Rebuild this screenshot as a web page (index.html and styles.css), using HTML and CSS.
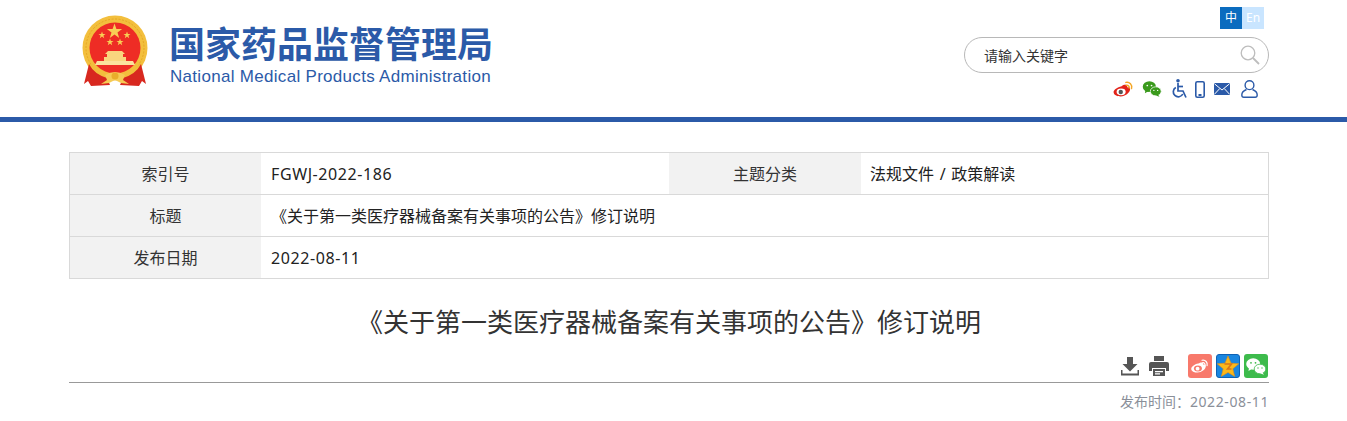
FILE: index.html
```html
<!DOCTYPE html>
<html lang="zh-CN">
<head>
  <meta charset="UTF-8">
  <title>《关于第一类医疗器械备案有关事项的公告》修订说明</title>
  <link rel="stylesheet" href="styles.css">
</head>
<body>
  <header class="header">
    <div class="wrap header-inner">
      <a class="logo">
        <svg class="emblem" width="68" height="72" viewBox="0 0 68 72">
          <circle cx="34" cy="34" r="32.500" fill="#f3bf3d"/>
          <circle cx="34" cy="34" r="29" fill="none" stroke="#e5a723" stroke-width="1" stroke-dasharray="2 1.500"/>
          <circle cx="34" cy="34" r="25.500" fill="#ee2c25"/>
          <path d="M33.500 9.500l1.900 5.400h5.700l-4.600 3.500 1.700 5.500-4.700-3.300-4.700 3.300 1.700-5.500-4.600-3.500h5.700z" fill="#f8cf55"/>
          <path d="M21 17.500l.9 2.500h2.600l-2.100 1.600.8 2.600L21 22.600l-2.200 1.600.8-2.600-2.100-1.600h2.600zM46 17.500l.9 2.500h2.600l-2.100 1.600.8 2.600L46 22.600l-2.200 1.600.8-2.600-2.100-1.600h2.600zM29 24.500l.9 2.500h2.600l-2.100 1.600.8 2.600L29 29.600l-2.200 1.600.8-2.600-2.100-1.600h2.600zM39 24.500l.9 2.500h2.600l-2.100 1.600.8 2.600L39 29.600l-2.200 1.600.8-2.600-2.100-1.600h2.600z" fill="#f8cf55"/>
          <path d="M27 37h14l3 3h-2v3h3v4H23v-4h3v-3h-2z" fill="#f9d67e"/>
          <path d="M16 47h36l2 4H14z" fill="#fbe29d"/>
          <path d="M8 50 Q13 60 26 64 L29 71 L10 72 L7 67 L3 70 Z" fill="#d8281f"/>
          <path d="M60 50 Q55 60 42 64 L39 71 L58 72 L61 67 L65 70 Z" fill="#d8281f"/>
          <path d="M11 50 Q20 63 34 63 Q48 63 57 50" fill="none" stroke="#f3bf3d" stroke-width="3"/>
          <path d="M24 61 Q34 55 44 61 L42 66 L48 70 L40 69 L34 66 L28 69 L20 70 L26 66Z" fill="#f6cb55"/>
          <circle cx="34" cy="62" r="3.500" fill="#e9ac2b"/>
        </svg>
      </a>
      <div class="brand">
        <div class="brand-cn">国家药品监督管理局</div>
        <div class="brand-en">National Medical Products Administration</div>
      </div>
      <div class="tools">
        <div class="lang">
          <span class="lang-zh">中</span>
          <span class="lang-en">En</span>
        </div>
        <div class="search">
          <span class="search-text">请输入关键字</span>
          <svg width="20" height="20" viewBox="0 0 20 20" fill="none" stroke="#bdbdbd">
            <circle cx="8" cy="8" r="6.800" stroke-width="1.300"/>
            <path d="M13 13l6 6" stroke-width="1.800"/>
          </svg>
        </div>
        <div class="quick">
          <svg width="21" height="17" viewBox="0 0 21 18">
            <path d="M8.500 5.500c3-2.200 5.500-1.500 5.800 0 .2.800 0 1.300 0 1.300 2-.5 3.500.4 3.200 2.300-.5 3.500-5 7.200-10 7.200C3.500 16.300 0 14.600 0 11.600 0 9.600 3.800 6.300 8.500 5.500z" fill="#e2231a"/>
            <ellipse cx="8" cy="11.500" rx="4.800" ry="3.600" fill="#fff"/>
            <circle cx="7.600" cy="11.600" r="2.300" fill="#555"/>
            <path d="M13 1.500c4-.8 7 2.500 6 6.500M13.500 4.500c2-.4 3.500 1.200 3 3" fill="none" stroke="#f5a623" stroke-width="1.500" stroke-linecap="round"/>
          </svg>
          <svg class="q-wx" width="20" height="16" viewBox="0 0 20 17" fill="#3a9a1c">
            <ellipse cx="7.200" cy="6" rx="7" ry="5.800"/>
            <path d="M3 9.500l-.5 3.500 4-2.500z"/>
            <ellipse cx="14" cy="11" rx="5.800" ry="4.800" stroke="#fff" stroke-width=".8"/>
            <path d="M16.500 14.500l1.500 2.300-4-1.500z"/>
            <circle cx="5" cy="4.800" r=".9" fill="#fff"/><circle cx="9.500" cy="4.800" r=".9" fill="#fff"/>
            <circle cx="12" cy="10" r=".7" fill="#fff"/><circle cx="16" cy="10" r=".7" fill="#fff"/>
          </svg>
          <svg class="q-wheel" width="17" height="20" viewBox="0 0 17 20" fill="none" stroke="#2b5aa8" stroke-width="1.700">
            <circle cx="7" cy="1.800" r="1.800" fill="#2b5aa8" stroke="none"/>
            <path d="M7 4v8h5l3 6.500"/>
            <path d="M7 7.500h5"/>
            <path d="M4.800 8.500a5 5 0 1 0 7 6.500"/>
          </svg>
          <svg class="q-phone" width="10" height="17" viewBox="0 0 10 17">
            <rect x=".8" y=".8" width="8.400" height="15.400" rx="1.500" fill="#fff" stroke="#2b5aa8" stroke-width="1.600"/>
            <rect x="3.500" y="13" width="3" height="2" fill="#2b5aa8"/>
          </svg>
          <svg class="q-mail" width="16" height="12" viewBox="0 0 16 12">
            <rect width="16" height="12" rx="1" fill="#2b5aa8"/>
            <path d="M.5 .8L8 7l7.500-6.200M.5 11.200L5.800 5.500M15.500 11.200L10.200 5.500" fill="none" stroke="#fff" stroke-width="1"/>
          </svg>
          <svg class="q-user" width="17" height="18" viewBox="0 0 17 18" fill="none" stroke="#2b5aa8" stroke-width="1.400">
            <circle cx="8.500" cy="5.200" r="4.400"/>
            <path d="M5.500 9.500C3 10.500.8 12.500.8 15c0 1.500.8 2.200 2 2.200h11.400c1.200 0 2-.7 2-2.200 0-2.500-2.200-4.500-4.700-5.500"/>
          </svg>
        </div>
      </div>
    </div>
  </header>

  <main class="wrap">
    <div class="info">
      <div class="info-row">
        <div class="info-label">索引号</div>
        <div class="info-value latin">FGWJ-2022-186</div>
        <div class="info-label info-label-mid">主题分类</div>
        <div class="info-value info-wide info-topic">法规文件 / 政策解读</div>
      </div>
      <div class="info-row">
        <div class="info-label">标题</div>
        <div class="info-value info-wide">《关于第一类医疗器械备案有关事项的公告》修订说明</div>
      </div>
      <div class="info-row">
        <div class="info-label">发布日期</div>
        <div class="info-value info-wide latin">2022-08-11</div>
      </div>
    </div>

    <h1 class="title">《关于第一类医疗器械备案有关事项的公告》修订说明</h1>

    <div class="actions">
      <svg class="act-down" width="18" height="19" viewBox="0 0 18 19" fill="#555">
        <path d="M6 0h6v7h4.500L9 14.500 1.500 7H6z"/>
        <path d="M0 13v5.500h18V13h-1.500v3.500H1.500V13z"/>
      </svg>
      <svg class="act-print" width="20" height="20" viewBox="0 0 20 20" fill="#555">
        <path d="M5 0h10v5H5z"/>
        <path d="M2 6h16a2 2 0 0 1 2 2v7h-3v-3H3v3H0V8a2 2 0 0 1 2-2z"/>
        <path d="M4 13h12v7H4zM6 15v1.200h8V15zM6 17.200v1.200h5v-1.200z" fill-rule="evenodd"/>
      </svg>
      <span class="share share-wb">
        <svg width="18" height="15" viewBox="0 0 21 18">
          <path d="M8.500 5.500c3-2.200 5.500-1.500 5.800 0 .2.800 0 1.300 0 1.300 2-.5 3.500.4 3.200 2.300-.5 3.500-5 7.200-10 7.200C3.500 16.300 0 14.600 0 11.600 0 9.600 3.800 6.300 8.500 5.500z" fill="#fff"/>
          <ellipse cx="8" cy="11.500" rx="4.800" ry="3.600" fill="#f8796b"/>
          <circle cx="7.600" cy="11.600" r="2.300" fill="#fff"/>
          <path d="M13 1.500c4-.8 7 2.500 6 6.500M13.500 4.500c2-.4 3.500 1.200 3 3" fill="none" stroke="#fff" stroke-width="1.500" stroke-linecap="round"/>
        </svg>
      </span>
      <span class="share share-qz">
        <svg width="22" height="21" viewBox="0 0 22 21">
          <path d="M11 0l3 7.200 7.800.6-6 5 1.900 7.600L11 16.400l-6.700 4 1.900-7.600-6-5L8 7.200z" fill="#fbb81b" stroke="#e89211" stroke-width=".6"/>
          <path d="M7.500 8h7l-4 5h4" fill="none" stroke="#d9761a" stroke-width="1.600"/>
        </svg>
      </span>
      <span class="share share-wx">
        <svg width="20" height="17" viewBox="0 0 20 17" fill="#fff">
          <ellipse cx="7.200" cy="6" rx="7" ry="5.800"/>
          <path d="M3 9.500l-.5 3.500 4-2.500z"/>
          <ellipse cx="14" cy="11" rx="5.800" ry="4.800" stroke="#3dbb4c" stroke-width=".8"/>
          <path d="M16.500 14.500l1.500 2.300-4-1.500z"/>
          <circle cx="5" cy="4.800" r=".9" fill="#3dbb4c"/><circle cx="9.500" cy="4.800" r=".9" fill="#3dbb4c"/>
          <circle cx="12" cy="10" r=".7" fill="#3dbb4c"/><circle cx="16" cy="10" r=".7" fill="#3dbb4c"/>
        </svg>
      </span>
    </div>

    <div class="date">发布时间：<span class="latin">2022-08-11</span></div>
  </main>
</body>
</html>
```

FILE: styles.css
```css
* {
  box-sizing: border-box;
}
html, body {
  overflow: hidden;
}
body {
  margin: 0;
  height: 421px;
  background: #fff;
  color: #333;
  font-family: "Noto Sans", "Noto Sans CJK SC", sans-serif;
}
.wrap {
  width: 1200px;
  margin-left: 69px;
}
.latin {
  letter-spacing: .6px;
}
.header {
  height: 122px;
  border-bottom: 5px solid #2b5aa8;
}
.header-inner {
  display: flex;
  height: 117px;
}
.logo {
  margin: 14px 0 0 12px;
}
.emblem {
  display: block;
}
.brand {
  margin: 0 0 0 20px;
  padding-top: 19px;
  color: #2b5aa8;
}
.brand-cn {
  font-family: "Noto Sans CJK SC", sans-serif;
  font-size: 36px;
  font-weight: 700;
  line-height: 47px;
  white-space: nowrap;
  width: 324px;
}
.brand-en {
  font-family: "Liberation Sans", sans-serif;
  font-size: 17px;
  line-height: 20px;
  letter-spacing: .3px;
  margin-top: 1px;
  margin-left: 1px;
  white-space: nowrap;
}
.tools {
  margin-left: auto;
  width: 305px;
  padding-top: 7px;
  display: flex;
  flex-direction: column;
  align-items: flex-end;
}
.lang {
  display: flex;
  margin-right: 5px;
}
.lang span {
  width: 22px;
  height: 22px;
  line-height: 22px;
  text-align: center;
  font-size: 12px;
  color: #fff;
}
.lang-zh {
  background: #0b6cbf;
}
.lang-en {
  background: #c9e5ff;
}
.search {
  width: 305px;
  height: 36px;
  margin-top: 8px;
  border: 1px solid #b8b8b8;
  border-radius: 18px;
  display: flex;
  align-items: center;
  justify-content: space-between;
  padding: 0 8px 0 19px;
}
.search-text {
  font-size: 14px;
  color: #333;
}
.quick {
  display: flex;
  align-items: center;
  margin-top: 6px;
  margin-right: 11px;
}
.q-wx {
  margin-left: 8px;
}
.q-wheel {
  margin-left: 9px;
}
.q-phone {
  margin-left: 7px;
}
.q-mail {
  margin-left: 9px;
}
.q-user {
  margin-left: 11px;
}
.info {
  margin-top: 30px;
  border: 1px solid #d9d9d9;
  border-bottom: 0;
}
.info-row {
  display: flex;
  height: 42px;
  border-bottom: 1px solid #d9d9d9;
}
.info-label {
  width: 191px;
  background: #f2f2f2;
  text-align: center;
  line-height: 43px;
  font-size: 16px;
  color: #333;
}
.info-label-mid {
  width: 192px;
}
.info-value {
  width: 408px;
  padding-left: 10px;
  line-height: 43px;
  font-size: 16px;
  color: #222;
}
.info-wide {
  width: auto;
  flex: 1;
}
.info-topic {
  padding-left: 9px;
  word-spacing: 1.5px;
}
.title {
  margin: 22px 0 0;
  text-align: center;
  font-size: 26px;
  font-weight: 400;
  line-height: 42px;
  color: #333;
}
.actions {
  display: flex;
  align-items: center;
  justify-content: flex-end;
  height: 41px;
  margin-top: -1px;
  border-bottom: 1px solid #999;
  padding: 12px 1px 4px 0;
}
.act-down {
  margin-right: 10px;
}
.act-print {
  margin-right: 19px;
}
.share {
  width: 24px;
  height: 24px;
  border-radius: 3px;
  margin-left: 4px;
  display: flex;
  align-items: center;
  justify-content: center;
}
.act-print + .share {
  margin-left: 0;
}
.share-wb {
  background: #f8796b;
}
.share-qz {
  background: #1a86e0;
  border: 1px solid #0f62b4;
}
.share-wx {
  background: #3dbb4c;
}
.date {
  text-align: right;
  margin-top: 9px;
  font-size: 14px;
  line-height: 20px;
  color: #8a8f99;
}
```
